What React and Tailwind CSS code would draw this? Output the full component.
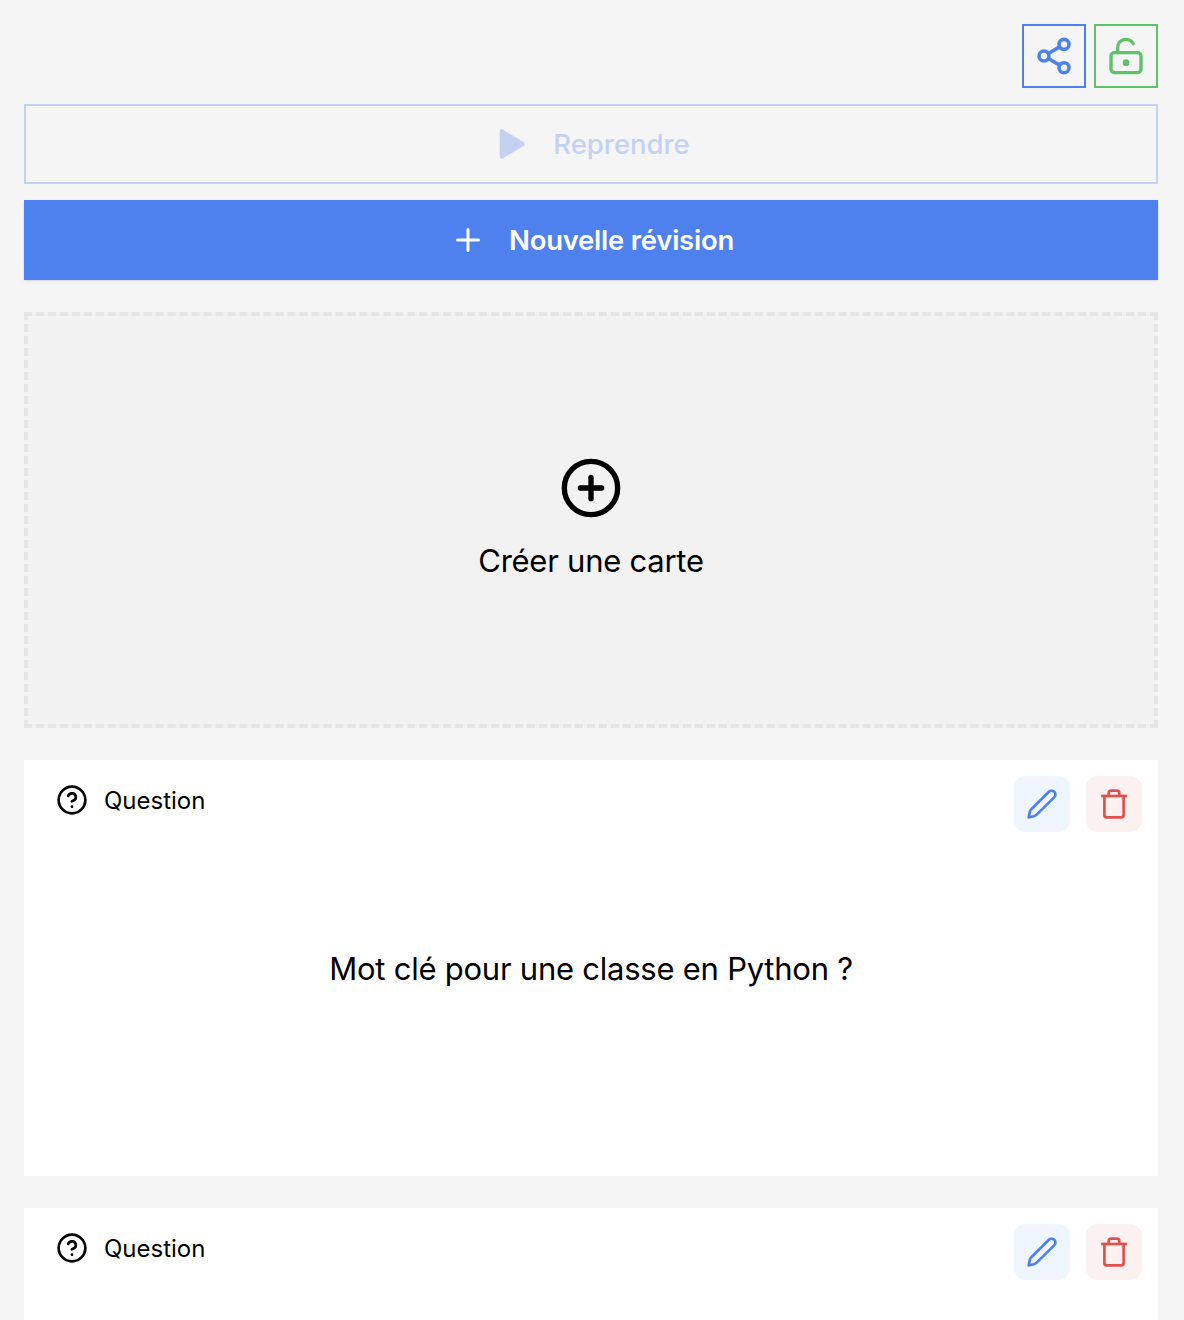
import { Share2, LockKeyholeOpen, CirclePlus } from "lucide-react";

function HelpIcon() {
  return (
    <svg className="size-8" viewBox="0 0 24 24" fill="none" stroke="currentColor" strokeWidth="2" strokeLinecap="round" strokeLinejoin="round">
      <circle cx="12" cy="12" r="10" />
      <path d="M9.09 9a3 3 0 0 1 5.83 1c0 2-3 3-3 3" />
      <path d="M12 17h.01" />
    </svg>
  );
}

function PenIcon() {
  return (
    <svg className="size-8" viewBox="0 0 24 24" fill="none" stroke="currentColor" strokeWidth="2" strokeLinecap="round" strokeLinejoin="round">
      <path d="M17.2 2.8a2.85 2.85 0 0 1 4.05 4.05L8.4 19.6Q7.2 20.7 5.8 21.2L2 22l.8-3.9Q3.1 16.8 4.2 15.8Z" />
    </svg>
  );
}

function TrashIcon() {
  return (
    <svg className="size-8" viewBox="0 0 24 24" fill="none" stroke="currentColor" strokeWidth="2" strokeLinecap="round" strokeLinejoin="round">
      <path d="M2.3 6h19.4" strokeLinecap="butt" />
      <path d="M19.2 6v14.2c0 1-.8 1.8-1.8 1.8H6.6c-1 0-1.8-.8-1.8-1.8V6" />
      <path d="M8 6V4c0-1.2.8-2 2-2h4c1.2 0 2 .8 2 2v2" />
    </svg>
  );
}

function PlayIcon() {
  return (
    <svg className="size-10" viewBox="0 0 40 40" fill="currentColor" stroke="currentColor" strokeWidth="4" strokeLinejoin="round">
      <path d="M9.7 7.2v25.6L30.8 20Z" />
    </svg>
  );
}

function PlusIcon() {
  return (
    <svg className="size-10" viewBox="0 0 40 40" fill="none" stroke="currentColor" strokeWidth="3" strokeLinecap="round">
      <path d="M20 9.5v21M9.5 20h21" />
    </svg>
  );
}

function Card({ text }) {
  return (
    <article className="flex h-[416px] shrink-0 flex-col bg-white">
      <header className="flex h-20 items-start justify-between pt-4 pr-4 pl-8">
        <div className="flex h-12 items-center gap-4 text-2xl">
          <HelpIcon />
          <span className="pt-0.5">Question</span>
        </div>
        <div className="flex gap-4">
          <button className="flex size-14 items-center justify-center rounded-xl bg-[#eff6ff] text-[#4f81ee]">
            <PenIcon />
          </button>
          <button className="flex size-14 items-center justify-center rounded-xl bg-[#fcf1f1] text-[#df514c]">
            <TrashIcon />
          </button>
        </div>
      </header>
      <p className="flex h-64 items-center justify-center pt-0.5 text-[31px] tracking-[-0.24px]">{text}</p>
    </article>
  );
}

export default function App() {
  return (
    <main className="flex h-screen flex-col overflow-hidden bg-[#f5f5f5] pt-6 pr-[26px] pl-6 font-['Inter',sans-serif] text-black">
      <div className="flex shrink-0 justify-end gap-2">
        <button className="flex size-16 items-center justify-center border-2 border-[#4f81ee] text-[#4f81ee]">
          <Share2 className="size-10" strokeWidth={2.15} />
        </button>
        <button className="flex size-16 items-center justify-center border-2 border-[#5ec269] text-[#5ec269]">
          <LockKeyholeOpen className="size-10" />
        </button>
      </div>
      <button className="mt-4 flex h-20 shrink-0 items-center justify-center gap-[21px] border-2 border-[#c3d2f3] text-[27.5px] font-[550] tracking-[-0.02px] text-[#c3d2f3]">
        <PlayIcon />
        <span className="pt-0.5">Reprendre</span>
      </button>
      <button className="mt-4 flex h-20 shrink-0 items-center justify-center gap-[21px] bg-[#4f81ee] text-[27.5px] font-semibold tracking-[-0.25px] text-white shadow-sm">
        <PlusIcon />
        <span className="pt-0.5">Nouvelle révision</span>
      </button>
      <button className="mt-8 flex h-[416px] shrink-0 flex-col items-center justify-center gap-[17px] border-4 border-dashed border-[#e5e5e5] bg-[#f2f2f2] text-[31px] leading-[47px] tracking-[-0.25px]">
        <CirclePlus className="size-16" />
        <span>Créer une carte</span>
      </button>
      <section className="mt-8 flex flex-col gap-8">
        <Card text="Mot clé pour une classe en Python ?" />
        <Card text="" />
      </section>
    </main>
  );
}
